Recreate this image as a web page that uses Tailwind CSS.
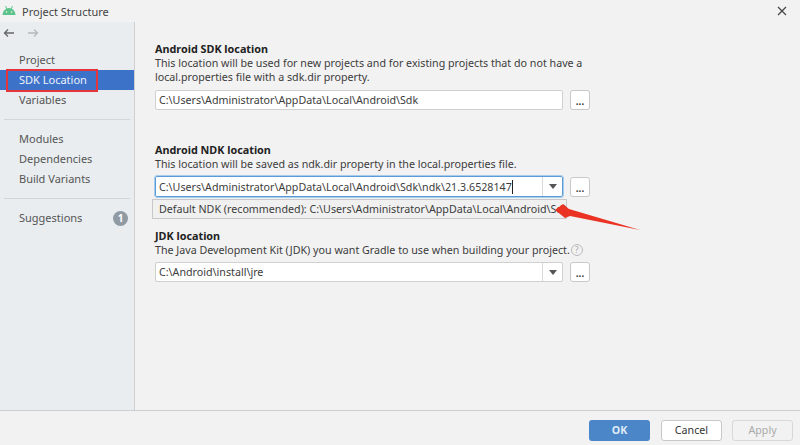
<!DOCTYPE html>
<html lang="en">
<head>
  <meta charset="UTF-8" />
  <title>Project Structure</title>
  <script src="https://cdn.jsdelivr.net/npm/@tailwindcss/browser@4"></script>
</head>
<body class="w-[800px] h-[445px] overflow-hidden relative bg-[#f2f2f2] text-[10.7px] text-[#3c3c3c] font-['Noto_Sans',sans-serif] flex flex-col">

  <!-- Title bar -->
  <div class="h-[22px] shrink-0 flex items-center pl-[2px] pr-[13px]">
    <svg width="14" height="10" viewBox="0 0 14 10" class="mr-[6px] mt-[-3px]"><path d="M0.5 10C0.8 6 3.500 3 7 3s6.200 3 6.500 7z" fill="#5cc48a"/><path d="M3.500 1l1.500 3M10.500 1L9 4" stroke="#5cc48a"/><circle cx="4.500" cy="7" r="0.800" fill="#f2f2f2"/><circle cx="9.500" cy="7" r="0.800" fill="#f2f2f2"/></svg>
    <span class="text-[11px] text-[#444] leading-none">Project Structure</span>
    <svg width="10" height="10" viewBox="0 0 10 10" class="ml-auto mb-[1px]"><path d="M1 1l8 8M9 1l-8 8" stroke="#444" stroke-width="1.200"/></svg>
  </div>

  <div class="flex flex-1 min-h-0">
    <!-- Sidebar -->
    <aside class="w-[135px] shrink-0 bg-[#e9edf0] border-r border-[#d0d0d0] flex flex-col text-[11px] text-[#555]">
      <div class="h-[22px] flex items-center gap-[12px] pl-[3px] shrink-0">
        <svg width="12" height="10" viewBox="0 0 12 10"><path d="M11 5H1.500M5 1.500L1.500 5 5 8.500" fill="none" stroke="#666" stroke-width="1.300"/></svg>
        <svg width="12" height="10" viewBox="0 0 12 10"><path d="M1 5h9.500M7 1.500L10.500 5 7 8.500" fill="none" stroke="#b5b8ba" stroke-width="1.300"/></svg>
      </div>
      <div class="mt-[6px] h-[20px] pl-[19px] flex items-center">Project</div>
      <div class="relative h-[20px] pl-[19px] flex items-center bg-[#3d72c9] text-[#eef3fb]">
        SDK Location
        <div class="absolute left-[6px] top-[-1px] w-[92px] h-[23px] border-[2px] border-[#e5343b]"></div>
      </div>
      <div class="h-[20px] pl-[19px] flex items-center">Variables</div>
      <div class="mx-[4px] my-[9px] h-px bg-[#d3d6d9]"></div>
      <div class="h-[20px] pl-[19px] flex items-center">Modules</div>
      <div class="h-[20px] pl-[19px] flex items-center">Dependencies</div>
      <div class="h-[20px] pl-[19px] flex items-center">Build Variants</div>
      <div class="mx-[4px] my-[9px] h-px bg-[#d3d6d9]"></div>
      <div class="h-[20px] pl-[19px] pr-[6px] flex items-center justify-between">
        Suggestions
        <span class="w-[15px] h-[15px] rounded-full bg-[#8f9aa3] text-white text-[10px] font-bold flex items-center justify-center">1</span>
      </div>
    </aside>

    <!-- Main content -->
    <main class="relative flex-1 pl-[20px] pt-[20px] leading-[14px]">
      <h2 class="font-bold text-[#222] text-[10.800px]">Android SDK location</h2>
      <p class="w-[440px]">This location will be used for new projects and for existing projects that do not have a local.properties file with a sdk.dir property.</p>
      <div class="flex gap-[7px] mt-[6px]">
        <div class="w-[408px] h-[20px] bg-white border border-[#d0d0d0] rounded-[2px] pl-[3px] flex items-center">C:\Users\Administrator\AppData\Local\Android\Sdk</div>
        <div class="w-[20px] h-[20px] bg-white border border-[#c8c8c8] rounded-[3px] flex items-center justify-center font-bold text-[10px] pt-[2px]">...</div>
      </div>

      <h2 class="font-bold text-[#222] text-[10.800px] mt-[33px]">Android NDK location</h2>
      <p>This location will be saved as ndk.dir property in the local.properties file.</p>
      <div class="flex gap-[7px] mt-[5px] items-center">
        <div class="w-[408px] h-[21px] bg-white border border-[#5b9bd8] rounded-[2px] outline outline-[#a9cbec] pl-[3px] flex items-center">
          <span>C:\Users\Administrator\AppData\Local\Android\Sdk\ndk\21.3.6528147</span>
          <span class="w-px h-[14px] bg-[#222]"></span>
          <span class="ml-auto w-[20px] h-full border-l border-[#d8d8d8] flex items-center justify-center"><svg width="8" height="5" viewBox="0 0 8 5"><path d="M0 0h8L4 5z" fill="#555"/></svg></span>
        </div>
        <div class="w-[20px] h-[20px] bg-white border border-[#c8c8c8] rounded-[3px] flex items-center justify-center font-bold text-[10px] pt-[2px]">...</div>
      </div>

      <!-- Completion popup -->
      <div class="absolute left-[17px] top-[177px] w-[415px] h-[20px] bg-[#f0f0f0] border border-[#c8c8c8] pl-[6px] flex items-center overflow-hidden whitespace-nowrap">Default NDK (recommended): C:\Users\Administrator\AppData\Local\Android\Sdk</div>

      <h2 class="font-bold text-[#222] text-[10.800px] mt-[32px]">JDK location</h2>
      <p class="flex items-center">The Java Development Kit (JDK) you want Gradle to use when building your project.
        <span class="ml-[1px] w-[12px] h-[12px] rounded-full border border-[#bbb] text-[#aaa] text-[9px] flex items-center justify-center">?</span>
      </p>
      <div class="flex gap-[7px] mt-[5px]">
        <div class="w-[408px] h-[20px] bg-white border border-[#d0d0d0] rounded-[2px] pl-[3px] flex items-center">
          <span>C:\Android\install\jre</span>
          <span class="ml-auto w-[20px] h-full border-l border-[#d8d8d8] flex items-center justify-center"><svg width="8" height="5" viewBox="0 0 8 5"><path d="M0 0h8L4 5z" fill="#555"/></svg></span>
        </div>
        <div class="w-[20px] h-[20px] bg-white border border-[#c8c8c8] rounded-[3px] flex items-center justify-center font-bold text-[10px] pt-[2px]">...</div>
      </div>
    </main>
  </div>

  <!-- Footer -->
  <footer class="h-[35px] shrink-0 border-t border-[#cfcfcf] flex items-start justify-end gap-[10px] pt-[9px] pr-[7px]">
    <button class="w-[61px] h-[21px] mr-[1px] rounded-[3px] bg-[#4a86c8] text-[#dfeaf6] font-bold flex items-center justify-center">OK</button>
    <button class="w-[61px] h-[21px] rounded-[3px] bg-white border border-[#c8c8c8] text-[#333] flex items-center justify-center">Cancel</button>
    <button class="w-[61px] h-[21px] rounded-[3px] border border-[#d8d8d8] text-[#aaa] flex items-center justify-center">Apply</button>
  </footer>

  <!-- Red annotation arrow -->
  <svg class="absolute left-[550px] top-[195px]" width="92" height="42" viewBox="0 0 92 42"><path d="M5 15L13 9 19 14 90 35 20 21 15 23z" fill="#ea3323"/></svg>
</body>
</html>
